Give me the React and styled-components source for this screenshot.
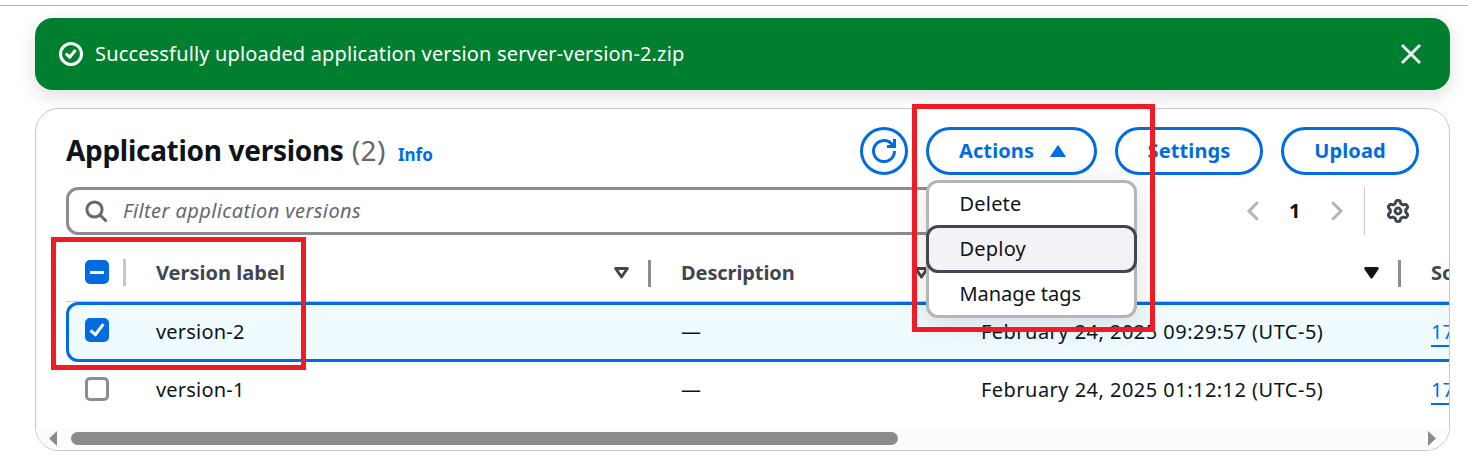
import React from 'react';
import styled, { createGlobalStyle } from 'styled-components';

const BLUE = '#006ce0';
const GREY = '#8c8c94';
const INK = '#0f141a';
const SLATE = '#424650';

const GlobalStyle = createGlobalStyle`
  * { box-sizing: border-box; }
  body {
    margin: 0;
    background: #fff;
    color: ${INK};
    font: 400 20px/30px "Noto Sans", "Open Sans", sans-serif;
    overflow: hidden;
  }
  svg { display: block; flex: none; overflow: visible; }
`;

const Page = styled.main`
  position: relative;
  width: 1468px;
  height: 466px;
  padding: 5px 18px 0 35px;
  overflow: hidden;
`;

const TopRule = styled.div`
  height: 1px;
  margin: 0 -18px 12px -35px;
  background: #b4b4bb;
`;

const Flash = styled.div`
  display: flex;
  align-items: center;
  height: 72px;
  padding: 0 28px 0 24px;
  border-radius: 18px;
  background: #00802f;
  color: #fff;
  box-shadow: 0 6px 18px 1px rgba(0, 7, 22, 0.12);
`;

const FlashText = styled.span`
  flex: 1;
  margin-left: 12px;
  letter-spacing: 0.16px;
`;

const Card = styled.section`
  display: flex;
  flex-direction: column;
  height: 343px;
  margin-top: 18px;
  border: 1px solid #c6c6cd;
  border-radius: 24px;
  background: #fff;
  overflow: hidden;
`;

const Header = styled.header`
  display: flex;
  align-items: center;
  justify-content: space-between;
  height: 48px;
  margin: 18px 30px 0;
`;

const Heading = styled.div`
  display: flex;
  align-items: baseline;
  padding-top: 2px;
`;

const Title = styled.h2`
  margin: 0;
  font-size: 28px;
  font-weight: 700;
  letter-spacing: -0.3px;
`;

const Count = styled.span`
  margin-left: 8px;
  font-size: 28px;
  color: #656871;
  letter-spacing: 0.5px;
`;

const InfoLink = styled.a`
  margin-left: 12px;
  font-size: 17px;
  font-weight: 700;
  color: ${BLUE};
`;

const Buttons = styled.div`
  display: flex;
  gap: 18px;
`;

const Button = styled.button`
  display: flex;
  align-items: center;
  justify-content: ${(p) => (p.$menu ? 'space-between' : 'center')};
  width: ${(p) => p.$width}px;
  height: 48px;
  padding: 0 ${(p) => (p.$menu ? '28px 0 30px' : '0')};
  border: 3px solid ${BLUE};
  border-radius: 30px;
  background: #fff;
  color: ${BLUE};
  font: inherit;
  font-weight: 700;
  letter-spacing: 0.1px;
`;

const Tools = styled.div`
  display: flex;
  align-items: center;
  height: 48px;
  margin: 12px 30px 0;
`;

const Search = styled.div`
  display: flex;
  align-items: center;
  width: 1050px;
  height: 48px;
  padding-left: 16px;
  border: 3px solid ${GREY};
  border-radius: 12px;
`;

const Placeholder = styled.span`
  margin-left: 15px;
  font-style: italic;
  color: #656871;
  letter-spacing: 0.4px;
`;

const Pager = styled.div`
  display: flex;
  align-items: center;
  margin-left: auto;
  height: 48px;
  padding-right: 21px;
  border-right: 1px solid #c6c6cd;
`;

const PageNumber = styled.span`
  width: 12px;
  margin: 0 30px 0 30px;
  font-weight: 700;
`;

const Gear = styled.div`
  padding: 0 9px 0 21px;
`;

const Table = styled.div`
  flex: 1;
  margin-left: 30px;
  overflow: hidden;
`;

const Row = styled.div`
  display: grid;
  grid-template-columns: 60px 525px 300px 450px 200px;
  width: 1535px;
`;

const HeadRow = styled(Row)`
  height: 67px;
  border-bottom: 1px solid #c6c6cd;
  padding-top: 9px;
  font-weight: 700;
  color: ${SLATE};
`;

const BodyRow = styled(Row)`
  height: ${(p) => (p.$selected ? 60 : 56)}px;
  ${(p) => p.$selected && `
    border-radius: 12px;
    background: #f0fbff;
    box-shadow: inset 0 0 0 3px ${BLUE};
  `}
`;

const Cell = styled.div`
  display: flex;
  align-items: center;
  padding-left: 30px;
  white-space: nowrap;
  letter-spacing: ${(p) => p.$spacing || 0}px;
`;

const HeadCell = styled(Cell)`
  justify-content: space-between;
  height: 58px;
`;

const Sort = styled.span`
  display: flex;
  align-items: center;
  gap: 19.5px;
`;

const Divider = styled.span`
  width: 3px;
  height: 27px;
  background: ${(p) => (p.$light ? '#c6c6cd' : GREY)};
`;

const CheckCell = styled.div`
  display: flex;
  align-items: center;
  gap: 14px;
  height: ${(p) => p.$height || 56}px;
  padding-left: 19px;
`;

const Checkbox = styled.span`
  display: grid;
  place-items: center;
  width: 24px;
  height: 24px;
  border: 3px solid ${(p) => (p.$on ? BLUE : GREY)};
  border-radius: 5px;
  background: ${(p) => (p.$on ? BLUE : '#fff')};
`;

const SourceLink = styled.a`
  height: 29px;
  line-height: 28px;
  color: ${BLUE};
  border-bottom: 2px solid ${BLUE};
`;

const ScrollTrack = styled.div`
  display: flex;
  align-items: center;
  height: 23px;
  padding: 0 13px;
  background: #fcfcfc;
`;

const Thumb = styled.div`
  width: 827px;
  height: 13px;
  margin: 0 auto 0 14px;
  border-radius: 7px;
  background: #8b8b8b;
`;

const Menu = styled.ul`
  position: absolute;
  left: 926px;
  top: 180px;
  width: 211px;
  height: 138px;
  margin: 0;
  padding: 0;
  list-style: none;
  border: 3px solid #b4b4bb;
  border-radius: 12px;
  background: #fff;
  box-shadow: 0 6px 30px 1px rgba(0, 7, 22, 0.12);
`;

const MenuItem = styled.li`
  display: flex;
  align-items: center;
  height: ${(p) => (p.$active ? 48 : 42)}px;
  padding-left: 30.5px;
  letter-spacing: ${(p) => p.$spacing}px;
  ${(p) => p.$active && `
    margin: 0 -3px;
    border: 3px solid ${SLATE};
    border-radius: 12px;
    background: #f3f3f7;
  `}
`;

const Highlight = styled.div`
  position: absolute;
  left: ${(p) => p.$x}px;
  top: ${(p) => p.$y}px;
  width: ${(p) => p.$w}px;
  height: ${(p) => p.$h}px;
  border: 5px solid #ee1c25;
`;

const SuccessIcon = () => (
  <svg width="24" height="24" viewBox="0 0 24 24" fill="none" stroke="#fff" strokeWidth="3">
    <circle cx="12" cy="12" r="10.5" />
    <path d="M6.8 11.600l4 3.400 5.800-7" />
  </svg>
);

const CloseIcon = () => (
  <svg width="22" height="22" viewBox="0 0 22 22" fill="none" stroke="#ebebf0" strokeWidth="3">
    <path d="M2 2l18 18M20 2L2 20" />
  </svg>
);

const RefreshIcon = () => (
  <svg width="24" height="24" viewBox="0 0 24 24" fill="none" stroke={BLUE} strokeWidth="3">
    <path d="M22.500 12A10.500 10.500 0 1 1 19.200 4.400L22 7" />
    <path d="M22.500 0V7.500H15" />
  </svg>
);

const SearchIcon = () => (
  <svg width="23" height="23" viewBox="0 0 23 23" fill="none" stroke="#656871" strokeWidth="3">
    <circle cx="9.500" cy="9.500" r="7.600" />
    <path d="M15 15l6.500 6.500" />
  </svg>
);

const Chevron = ({ right }) => (
  <svg width="12" height="20" viewBox="0 0 12 20" fill="none" stroke="#b4b4bb" strokeWidth="3">
    <path d={right ? 'M1.200 1.200L10 10l-8.800 8.800' : 'M10.800 1.200L2 10l8.800 8.800'} />
  </svg>
);

// Outline of a cog with six rounded teeth, the first one pointing up.
const cogOutline = Array.from({ length: 72 }, (_, i) => {
  const angle = (i / 72) * Math.PI * 2;
  const wave = Math.max(-1, Math.min(1, 1.6 * Math.cos(6 * angle)));
  const radius = 9.1 + 1.4 * wave;
  return `${(12 + radius * Math.sin(angle)).toFixed(2)},${(12 - radius * Math.cos(angle)).toFixed(2)}`;
}).join(' ');

const GearIcon = () => (
  <svg width="24" height="24" viewBox="0 0 24 24" fill="none" stroke={SLATE} strokeWidth="3" strokeLinejoin="round">
    <polygon points={cogOutline} />
    <circle cx="12" cy="12" r="2.900" />
  </svg>
);

const CaretUp = () => (
  <svg width="16" height="12" viewBox="0 0 16 12" fill={BLUE} stroke={BLUE} strokeWidth="1" strokeLinejoin="round">
    <path d="M8 .5L15.300 11.500H.7z" />
  </svg>
);

const SortIcon = ({ filled }) => (
  <svg width="15" height="12" viewBox="0 0 15 12" fill={filled ? INK : 'none'} stroke={filled ? INK : SLATE} strokeWidth="3" strokeLinejoin="round">
    <path d="M1.700 1.500h11.600L7.500 10z" />
  </svg>
);

const ScrollArrow = ({ right }) => (
  <svg width="8" height="15" viewBox="0 0 8 15" fill="#8b8b8b">
    <path d={right ? 'M0 0l8 7.500-8 7.500z' : 'M8 0L0 7.500 8 15z'} />
  </svg>
);

const columns = [
  { label: 'Version label', spacing: 0.02 },
  { label: 'Description', spacing: -0.1 },
  { label: '', filled: true },
];

const versions = [
  { label: 'version-2', date: 'February 24, 2025 09:29:57 (UTC-5)', selected: true },
  { label: 'version-1', date: 'February 24, 2025 01:12:12 (UTC-5)', selected: false },
];

export default function App() {
  return (
    <Page>
      <GlobalStyle />
      <TopRule />
      <Flash>
        <SuccessIcon />
        <FlashText>Successfully uploaded application version server-version-2.zip</FlashText>
        <CloseIcon />
      </Flash>

      <Card>
        <Header>
          <Heading>
            <Title>Application versions</Title>
            <Count>(2)</Count>
            <InfoLink>Info</InfoLink>
          </Heading>
          <Buttons>
            <Button $width={48} aria-label="Refresh"><RefreshIcon /></Button>
            <Button $width={171} $menu>Actions<CaretUp /></Button>
            <Button $width={148}>Settings</Button>
            <Button $width={138}>Upload</Button>
          </Buttons>
        </Header>

        <Tools>
          <Search>
            <SearchIcon />
            <Placeholder>Filter application versions</Placeholder>
          </Search>
          <Pager>
            <Chevron />
            <PageNumber>1</PageNumber>
            <Chevron right />
          </Pager>
          <Gear><GearIcon /></Gear>
        </Tools>

        <Table>
          <HeadRow>
            <CheckCell>
              <Checkbox $on>
                <svg width="14" height="3" viewBox="0 0 14 3" fill="#fff"><rect width="14" height="3" /></svg>
              </Checkbox>
              <Divider $light />
            </CheckCell>
            {columns.map((c) => (
              <HeadCell key={c.label} $spacing={c.spacing}>
                <span>{c.label}</span>
                <Sort><SortIcon filled={c.filled} /><Divider /></Sort>
              </HeadCell>
            ))}
            <HeadCell>Source</HeadCell>
          </HeadRow>
          {versions.map((v) => (
            <BodyRow key={v.label} $selected={v.selected}>
              <CheckCell $height={v.selected ? 56 : 54}>
                <Checkbox $on={v.selected}>
                  {v.selected && (
                    <svg width="16" height="14" viewBox="0 0 16 14" fill="none" stroke="#fff" strokeWidth="3">
                      <path d="M1.500 7.500l5 4L14.300 1.200" />
                    </svg>
                  )}
                </Checkbox>
              </CheckCell>
              <Cell $spacing={0.2}>{v.label}</Cell>
              <Cell>—</Cell>
              <Cell $spacing={0.47}>{v.date}</Cell>
              <Cell><SourceLink>1740</SourceLink></Cell>
            </BodyRow>
          ))}
        </Table>

        <ScrollTrack>
          <ScrollArrow />
          <Thumb />
          <ScrollArrow right />
        </ScrollTrack>
      </Card>

      <Menu>
        <MenuItem $spacing={0.2}>Delete</MenuItem>
        <MenuItem $spacing={0.2} $active>Deploy</MenuItem>
        <MenuItem $spacing={-0.05}>Manage tags</MenuItem>
      </Menu>

      <Highlight $x={51} $y={237} $w={255} $h={133} />
      <Highlight $x={912} $y={104} $w={243} $h={228} />
    </Page>
  );
}
